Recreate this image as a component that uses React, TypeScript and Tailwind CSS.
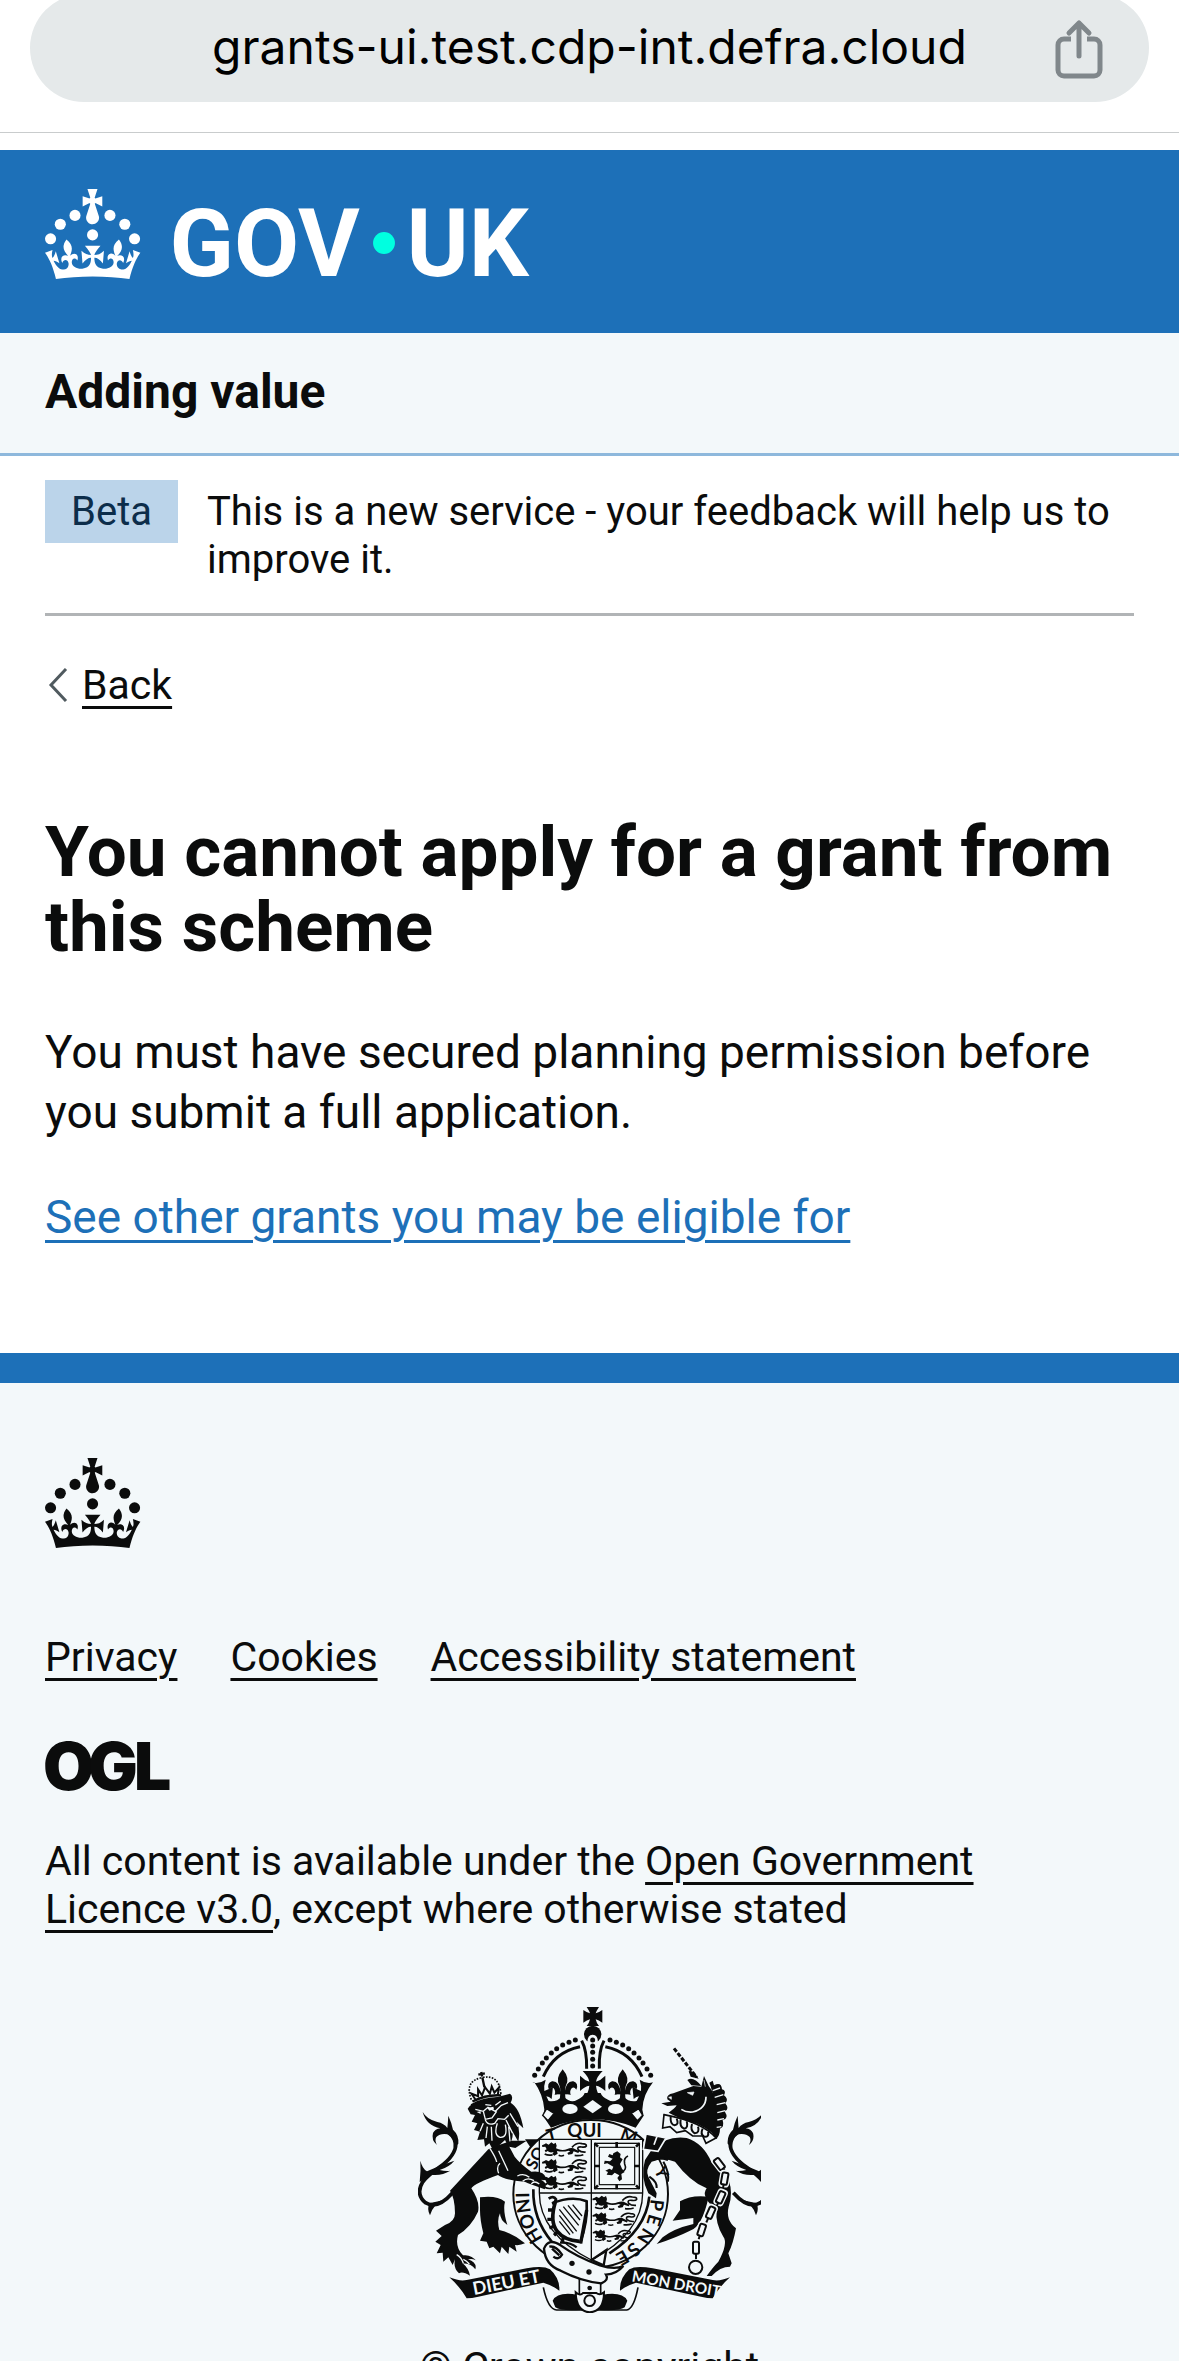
import type { ReactNode } from "react";

const INK = "#0b0c0c";
const PAPER = "#f3f8fa";

function CrownShape() {
  return (
    <g fill="currentColor">
      <circle cx="20" cy="17.6" r="3.7" />
      <circle cx="10.2" cy="23.5" r="3.7" />
      <circle cx="3.7" cy="33.2" r="3.7" />
      <circle cx="31.7" cy="30.6" r="3.7" />
      <circle cx="43.3" cy="17.6" r="3.7" />
      <circle cx="53.2" cy="23.5" r="3.7" />
      <circle cx="59.7" cy="33.2" r="3.7" />
      <path d="M33.1,9.8c.2-.1.3-.3.5-.5l4.6,2.4v-6.8l-4.6,1.5c-.1-.2-.3-.3-.5-.5l1.9-5.9h-6.7l1.9,5.9c-.2.1-.3.3-.5.5l-4.6-1.5v6.8l4.6-2.4c.1.2.3.3.5.5l-2.6,8c-.9,2.8,1.2,5.7,4.1,5.7h0c3,0,5.1-2.9,4.1-5.7l-2.6-8ZM37,37.9s-3.4,3.8-4.1,6.1c2.2,0,4.2-.5,6.4-2.8l-.7,8.5c-2-2.8-4.4-4.1-5.7-3.8.1,3.1.5,6.7,5.8,7.2,3.7.3,6.7-1.5,7-3.8.4-2.6-2-4.3-3.7-1.6-1.4-4.5,2.4-6.1,4.9-3.2-1.9-4.5-1.8-7.7,2.4-10.9,3,4,2.6,7.3-1.2,11.1,2.4-1.3,6.2,0,4,4.6-1.2-2.8-3.7-2.2-4.2.2-.3,1.7.7,3.7,3,4.2,1.9.3,4.7-.9,7-5.9-1.3,0-2.4.7-3.9,1.7l2.4-8c.6,2.3,1.4,3.7,2.2,4.5.6-1.6.5-2.8,0-5.3l5,1.8c-2.6,3.6-5.2,8.7-7.3,17.5-7.4-1.1-15.7-1.7-24.5-1.7h0c-8.8,0-17.1.6-24.5,1.7-2.1-8.9-4.7-13.9-7.3-17.5l5-1.8c-.5,2.5-.6,3.7,0,5.3.8-.8,1.6-2.3,2.2-4.5l2.4,8c-1.5-1-2.6-1.7-3.9-1.7,2.3,5,5.2,6.2,7,5.9,2.3-.4,3.3-2.4,3-4.2-.5-2.4-3-3.1-4.2-.2-2.2-4.6,1.6-6,4-4.6-3.7-3.7-4.2-7.1-1.2-11.1,4.2,3.2,4.3,6.4,2.4,10.9,2.5-2.8,6.3-1.3,4.9,3.2-1.8-2.7-4.1-1-3.7,1.6.3,2.3,3.3,4.1,7,3.8,5.4-.5,5.7-4.2,5.8-7.2-1.3-.2-3.7,1-5.7,3.8l-.7-8.5c2.2,2.3,4.2,2.7,6.4,2.8-.7-2.3-4.1-6.1-4.1-6.1h10.6Z" />
    </g>
  );
}

function GovUkLogo() {
  return (
    <svg viewBox="0 0 324 60" className="h-[90px] w-[486px] overflow-visible text-white" role="img" aria-label="GOV.UK">
      <CrownShape />
      <g fill="currentColor" fontFamily="Roboto, sans-serif" fontWeight="700" fontSize="63">
        <text x="83" y="58">GOV</text>
        <text x="241" y="58">UK</text>
      </g>
      <circle cx="226" cy="36" r="7.3" fill="#00ffe0" />
    </svg>
  );
}

function OglLogo() {
  return (
    <svg viewBox="0 0 123 50" className="h-[50px] w-[123px] overflow-visible" role="img" aria-label="Open Government Licence">
      <g fill={INK} fontFamily="Inter, sans-serif" fontWeight="900" fontSize="66">
        <text x="-2" y="49">O</text>
        <text x="43" y="49">G</text>
        <text x="89" y="49">L</text>
      </g>
    </svg>
  );
}

const pearls: [number, number][] = [
  [404, 286], [415, 267], [427, 249], [439, 234], [454, 219], [470, 206], [488, 195], [507, 187], [526, 180],
];

/* One passant lion, drawn facing left in a 130 x 46 box. */
function PassantLion({ x, y, s = 1 }: { x: number; y: number; s?: number }) {
  return (
    <g transform={`translate(${x} ${y}) scale(${s})`}>
      <path d="M6 4l8 4 8-7 7 5 6-4 3 9-2 8 8 3q14 4 26-1q14-6 24 1l12 6-3 5-14-5-4 8-12 2-3-5 9-5-6-2q-16 5-34 1l2 8-10 6-6-5 4-6q-12 4-18-3l-6 4-3-6 6-3-4-8-9 1-1-5 7-3z" fill={INK} />
      <path d="M84 16q14-16 30-11q14 0 13 7q-3 5-14 3q-16-2-10 9q8 7 22 6" fill="none" stroke={INK} strokeWidth="5" />
      <path d="M2 36q12 6 24 2M44 40q8 4 16 0M92 40q14 2 26-2" fill="none" stroke={INK} strokeWidth="5" />
    </g>
  );
}

function Fleur({ x, y }: { x: number; y: number }) {
  return (
    <g transform={`translate(${x} ${y})`} fill={INK}>
      <path d="M0 0q22 26 10 48q-4 8-3 22l2 25h-18l2-25q1-14-3-22q-12-22 10-48z" />
      <path d="M-6 70q-4-36-26-34q-17 6-9 25q7-10 14-4q7 8 3 20z" />
      <path d="M6 70q4-36 26-34q17 6 9 25q-7-10-14-4q-7 8-3 20z" />
      <path d="M-20 66h40v9h-40z" />
    </g>
  );
}

function SideTail() {
  return (
    <g>
      <path d="M158 638Q112 690 76 668Q46 642 68 606Q84 586 118 562Q176 520 166 480Q150 448 118 456" fill="none" stroke={INK} strokeWidth="11" />
      <path d="M68 396q12 22 44 30q20 4 30 18q2-20 3-37q10 22 14 42q18 16 16 42l-14 12q2-26-18-40q-22-4-34 8q-6 10 2 24q-18-14-12-36q6-12 22-14q-42-8-53-49z" fill={INK} />
      <path d="M61 542q6 24 20 32q38-18 82-32q-14 18-44 28q18 4 32 2q-26 16-58 12l-34 22q4-36 2-64z" fill={INK} />
      <path d="M90 706q-10-18-2-36l44-10q-34 14-42 46z" fill={INK} />
    </g>
  );
}

function RoyalArms() {
  return (
    <svg viewBox="54 81 1029 918" className="h-[306px] w-[343px]" role="img" aria-label="Royal coat of arms of the United Kingdom">
      {/* garter behind the supporters */}
      <path d="M375 478h400l-30 60h-330z" fill={INK} />
      <ellipse cx="572" cy="642" rx="232" ry="222" fill={PAPER} stroke={INK} strokeWidth="6" />
      <path d="M400 628q-2 90 56 158M748 650q-10 100-120 170" fill="none" stroke={INK} strokeWidth="8" />

      {/* garter motto */}
      <path id="motto-left" d="M430 776Q374 700 392 590" fill="none" />
      <g fill={INK} fontFamily="Lato, sans-serif" fontWeight="700" fontSize="56">
        <text><textPath href="#motto-left">HONI</textPath></text>
        <text x="502" y="470">QUI</text>
        <text x="406" y="572" fontSize="50" transform="rotate(-62 406 572)">SO</text>
        <text x="444" y="486" fontSize="52" transform="rotate(-14 444 486)">T</text>
        <text x="658" y="476" fontSize="52" transform="rotate(20 658 476)">M</text>
        <text x="762" y="570" fontSize="50" transform="rotate(66 762 570)">Y</text>
        <text x="752" y="656" transform="rotate(96 752 656)">P</text>
        <text x="748" y="700" transform="rotate(106 748 700)">E</text>
        <text x="732" y="740" transform="rotate(122 732 740)">N</text>
        <text x="700" y="784" transform="rotate(138 700 784)">S</text>
        <text x="672" y="808" transform="rotate(150 672 808)">E</text>
      </g>

      {/* imperial crown */}
      <path d="M560 81h37q-8 12-10 19q9-2 20-10v38q-11-8-20-10q2 10 10 20h-37q8-10 10-20q-9 2-20 10v-38q11 8 20 10q-2-7-10-19z" fill={INK} />
      <circle cx="578" cy="163" r="26" fill={INK} />
      <path d="M562 270V188q0-24 16-24t16 24v82z" fill={PAPER} />
      <path d="M545 182q16 30 15 84M612 182q-16 30-14 84" fill="none" stroke={INK} strokeWidth="9" />
      {[180, 198, 217, 238, 258].map((y) => <circle key={y} cx="578" cy={y} r="7.5" fill={INK} />)}
      {pearls.map(([x, y]) => (
        <g key={x} fill={INK}>
          <circle cx={x} cy={y} r="7.5" />
          <circle cx={1156 - x} cy={y} r="7.5" />
        </g>
      ))}
      <path d="M430 290Q462 216 540 200M726 290Q694 216 616 200" fill="none" stroke={INK} strokeWidth="9" />
      <path d="M397 307q20 6 40-8q-6 18-4 34q14-4 26-14l-4 38q-8-8-16-8l7 14q24 4 38-12h8q20 20 40 8q18-8 22-20h48q4 12 22 20q20 12 40-8h8q14 16 38 12l7-14q-8 0-16 8l-4-38q12 10 26 14q2-16-4-34q20 14 40 8q-30 36-32 82l4 18-24 36q-128-50-254 0l-24-36 4-18q-4-46-30-82z" fill={INK} />
      <Fleur x={488} y={268} />
      <Fleur x={668} y={268} />
      <path d="M548 273h60q-18 18-20 32q14-4 28-18v46q-14-14-28-16q2 20 14 36h-48q12-16 14-36q-14 2-28 16v-46q14 14 28 18q-2-14-20-32z" fill={INK} />
      <path d="M550 380l28-20 28 20-28 20z" fill={PAPER} />
      <ellipse cx="510" cy="387" rx="23" ry="15" fill={PAPER} />
      <ellipse cx="647" cy="387" rx="23" ry="15" fill={PAPER} />
      <path d="M440 386l22 14-18 22-16-16zM716 386l-22 14 18 22 16-16z" fill={PAPER} stroke={INK} strokeWidth="4" />

      {/* shield */}
      <path d="M418 478h310v160q0 120-154 202Q418 760 418 638z" fill={PAPER} stroke={INK} strokeWidth="4" />
      <path d="M574 478v362M418 639h310" stroke={INK} strokeWidth="4" />
      <PassantLion x={432} y={486} />
      <PassantLion x={432} y={536} />
      <PassantLion x={432} y={586} />
      <PassantLion x={583} y={646} />
      <PassantLion x={583} y={696} s={0.95} />
      <PassantLion x={583} y={748} s={0.85} />
      <g fill="none" stroke={INK}>
        <rect x="584" y="490" width="134" height="136" strokeWidth="4" />
        <rect x="598" y="502" width="106" height="112" strokeWidth="3.5" />
        <path d="M582 558h18M702 558h18M650 486v18M650 612v16M584 490l10 10M718 490l-10 10M584 626l10-10M718 626l-10-10" strokeWidth="8" />
      </g>
      <path d="M640 520l12-6 10 8-2 10 8 6-8 14 6 14 8 10-10 6 2 16-8 6-6-10 6-8-14-8-8 8-16-2 4-8-8-4 12-6 8 4 4-10-18-10-10 2 2-10 16 2 8-8-14-6 4-8 10 4z" fill={INK} />
      <path d="M664 576q18-6 10-24q-4-18 10-24" fill="none" stroke={INK} strokeWidth="5" />
      {/* harp */}
      <path d="M446 656q14-10 22 2q-2 10-12 12q60-24 104-6q4 60-20 126" fill="none" stroke={INK} strokeWidth="8" />
      <path d="M560 690l-18 100" stroke={INK} strokeWidth="10" />
      <path d="M466 666q-18 60 6 88q20 26 66 30" fill="none" stroke={INK} strokeWidth="11" />
      <path d="M444 690h18M442 718h18M448 744l16-6M462 766l14-12M486 786l6-18" stroke={INK} strokeWidth="10" />
      <path d="M478 688l52 66M478 706l42 54M478 724l32 40M490 680l46 56M504 676l36 44M518 674l28 34" stroke={INK} strokeWidth="4" />

      {/* lion */}
      <SideTail />
      <path d="M265 508L150 632q15 23 15 68q0 25-30 35l-27 17 17 16-19 17 16 10-12 25 18-2 2 27 15-13 13 23 7-17q-6 26 12 42q10-8 33 7q-4-22-22-37q26 0 38 18q6-20-22-30q20-4 27 7q-17-23-42-19q-25-26-15-61q40-25 60-70q7-30-20-70q10-15 80-40q15 14 80 20l10 5 50 18q10-18-10-28l15-5q-8-25-45-20q-35-25-50-45l-16-30 18 4 34-22h-45q-40 12-75 28z" fill={INK} />
      <path d="M240 652q50-7 75 13q-7 25 7 70q-22-15-22-35q-10 20-2 50q42 10 77 40q-15 7-30 5l5 20-22-15-3 22-20-22-5 20-20-20-12 5-8-20-20-3 10-22q-10-40-10-70z" fill={INK} />
      <path d="M203 386q10-18 37-21l90-24q12 8 2 27q28 17 38 77l-20-20q12 25 5 60l-17-30q2 25-13 45l-10-20-35 32-12-22-13 10-3-22-20 2 8-25-18-5 10-20-17-5 10-20-13-2z" fill={INK} />
      <g fill="none" stroke={PAPER} strokeWidth="4">
        <path d="M226 388l24 6 14-12 22 12 18-18 20-8M250 394l6 24 20-4 14-20M256 420q8 18 28 10l10-14 20 2 12-12M286 376l16-12M274 376l-18-2" />
        <path d="M292 430q-12 36 8 42q24 2 16-38M318 420l20 40M330 400l24 40M250 430l-10 24M262 440l-4 34M274 440l2 42M326 440l4 44" />
        <path d="M270 506q18 28 20 40M296 512l28 60M352 588q20-10 36 4M368 604q14-14 34-2M394 612q8-12 24 0M170 824q14 8 20 26M190 838q10 4 18 14M300 550q-12 10-4 30" />
      </g>
      <path d="M262 384l18-4 2 8-14 4zM230 396l12-2v8z" fill={PAPER} />
      <g fill="none" stroke={INK} strokeWidth="5" transform="rotate(-12 255 335)">
        <path d="M206 366q48-14 98 0M212 356q46-12 88 0" strokeWidth="7" />
        <path d="M210 350q-10-60 46-58q52 0 44 60" strokeDasharray="5 4" />
        <path d="M256 292v30M256 275v14M246 281h20" strokeWidth="7" />
        <path d="M222 352l-8-20 18 12 4-20 8 20 14-22 10 22 10-20 4 20 16-12-8 22" strokeWidth="6" />
      </g>

      {/* unicorn */}
      <g transform="translate(1158 0) scale(-1 1)"><SideTail /></g>
      <path d="M822 205L890 292" stroke={INK} strokeWidth="9" strokeDasharray="13 5" />
      <path d="M862 300q18-12 42 18l-30-2zM866 274q14-6 30 22l-24-6z" fill={INK} />
      <path d="M802 358q-4-14 18-18l60-22 24 2 8-32 14 30q22 24 22 70q10 42-10 72q-40-32-90-42q-24-10-42-20q18-12 24-22l-28 2-18-8 28-5z" fill={INK} />
      <path d="M862 338l20-2-4 10zM806 352l8-2v8zM912 300l4 20" fill={PAPER} stroke={PAPER} strokeWidth="2" />
      <path d="M918 350q0 36-40 46q-20 2-34-8" fill="none" stroke={PAPER} strokeWidth="5" />
      <path d="M928 308l10-6 4 14q22-12 24 12q14 4 6 18q16 12 4 24q14 18-2 24q14 22-6 26q6 22-8 26q0 20-12 32l-12-20q16-60 6-90q-4-36-14-60z" fill={INK} />
      <path d="M938 332l22-8M944 352l26-8M950 374l26-6M952 398l24-6M952 420l20-4M950 442l14-2" stroke={PAPER} strokeWidth="4" />
      <path d="M756 508Q800 466 860 474q50 16 74 72l52 54q14 40 0 80q-10 40 22 65q-8 45-23 75l10 30-5 10q-30 0-55 28h-15q20-28 35-43q30-55 15-75q-25-40-20-80q-50-40-30-65q-50-20-95-80q-35-15-70 0q-20 25-10 45l25 50-2 15-23-15q-25-50-10-100z" fill={INK} />
      <path d="M792 404l-4 40 22-4 20 18 26-6 22 16 30 0 10 22 30-16q-40-48-156-70z" fill={PAPER} stroke={INK} strokeWidth="5" />
      <path d="M812 410q-2 24 12 26q14-2 6-20M842 418q-4 22 10 28q14-2 8-22M876 432q-6 20 8 28q16-2 10-20M908 446q-8 16 4 24q16 2 12-14" fill="none" stroke={INK} strokeWidth="6" />
      <path d="M738 462l60 12-24 40-44-6zM778 450l-16 44" fill={INK} stroke={PAPER} strokeWidth="5" />
      <path d="M926 650q-54-6-86 14v26l-22 32 62-8v18q-60 14-92 40l-18 20q60-20 100-40q36-10 56-102z" fill={INK} />
      <path d="M748 590q24 16 22 34M790 545q18 30 14 60M760 540q16-10 44 0" fill="none" stroke={INK} strokeWidth="6" />
      {/* chain */}
      <g>
        {[[958, 552, -38], [974, 596, 10], [962, 652, 24], [932, 698, 24], [905, 750, 18], [888, 803, 0]].map(([x, y, a]) => (
          <g key={y} transform={`translate(${x} ${y}) rotate(${a})`}>
            <rect x="-11" y="-21" width="22" height="42" rx="6" fill={PAPER} stroke={PAPER} strokeWidth="10" />
            <rect x="-9" y="-18" width="18" height="36" rx="5" fill={PAPER} stroke={INK} strokeWidth="6" />
            <path d="M0 16v18" stroke={INK} strokeWidth="6" />
          </g>
        ))}
        <circle cx="887" cy="862" r="20" fill="none" stroke={INK} strokeWidth="6" />
      </g>

      {/* ribbon and belt */}
      <path d="M430 922q14 66 40 68h210q22-4 34-68" fill={PAPER} stroke={INK} strokeWidth="5" />
      <path d="M458 962q14-28 74-18l10 46q-60 4-76-8zM682 962q-14-28-74-18l-10 46q60 4 76-8z" fill={INK} />
      <path d="M148 892q32 13 52 8l180-35q50-10 70 3q30 27 28 64q-23-17-48-24l-195 42q-20 5-35 5q-20-35-52-63z" fill={INK} />
      <path d="M990 892q-32 13-52 8l-180-35q-50-10-70 3q-30 27-28 64q23-17 48-24l195 42q20 5 35 5q20-35 52-63z" fill={INK} />
      <g fill={PAPER} fontFamily="Lato, sans-serif" fontWeight="700" fontSize="54">
        <text x="222" y="945" transform="rotate(-11 222 945)">DIEU ET</text>
        <text x="694" y="904" fontSize="46" transform="rotate(10 694 904)">MON DROIT</text>
      </g>
      <path d="M538 880h64v70h-64z" fill={PAPER} stroke={INK} strokeWidth="5" />
      <path d="M432 806q14-34 50-10q50 36 118 60q44 14 70 2q-20 24-52 26q10 16-14 26q-60-6-122-38q-46-16-50-66z" fill={PAPER} stroke={INK} strokeWidth="7" />
      <path d="M448 800q20-4 38 24q-10 18-26 6M456 806l22 20" fill="none" stroke={INK} strokeWidth="7" />
      <path d="M575 840l44-30-8 46zM480 788q30-2 50 14" fill="none" stroke={INK} strokeWidth="7" />
      <circle cx="516" cy="850" r="8" fill={INK} />
      <circle cx="567" cy="876" r="8" fill={INK} />
      <path d="M527 937q14 12 22 2h40q10 8 23-2q0 58-43 60q-40-2-42-60z" fill={PAPER} stroke={INK} strokeWidth="6" />
      <circle cx="569" cy="962" r="16" fill="none" stroke={INK} strokeWidth="6" />
      <circle cx="569" cy="924" r="7" fill={INK} />
    </svg>
  );
}

function TextLink({ href, children }: { href: string; children: ReactNode }) {
  return (
    <a href={href} className="underline decoration-3 underline-offset-[7px]">
      {children}
    </a>
  );
}

export default function App() {
  return (
    <div className="flex h-screen flex-col overflow-hidden bg-white font-['Roboto',sans-serif] text-[40px] leading-[48px] text-[#0b0c0c]">
      <div className="shrink-0 border-b border-[#c9cccd] px-[30px] pb-[30px]">
        <div className="-mt-[6px] flex h-[108px] items-center rounded-full bg-[#e5e9ea] pt-[2px] pr-[46px] pl-[94px]">
          <input
            type="text"
            readOnly
            aria-label="Address"
            value="grants-ui.test.cdp-int.defra.cloud"
            className="h-[60px] w-full min-w-0 flex-1 bg-transparent pb-1 text-center font-['Inter',sans-serif] text-[48px] leading-[60px] text-black outline-none"
          />
          <button type="button" aria-label="Share">
            <svg viewBox="0 0 48 60" className="h-[60px] w-[48px]" fill="none" stroke="#80878b" strokeWidth="5" strokeLinecap="round" strokeLinejoin="round">
              <path d="M16 20H9a6 6 0 0 0-6 6v25a6 6 0 0 0 6 6h30a6 6 0 0 0 6-6V26a6 6 0 0 0-6-6h-7" strokeLinecap="butt" />
              <path d="M24 37V4M14 14l10-10 10 10" />
            </svg>
          </button>
        </div>
      </div>

      <header className="mt-[17px] shrink-0">
        <div className="bg-[#1d70b8] px-[45px] pt-[39px] pb-[54px]">
          <a href="#home" className="block w-fit"><GovUkLogo /></a>
        </div>
        <div className="border-b-3 border-[#8eb8dc] bg-[#f3f8fa] px-[45px] pt-[29px] pb-[31px] text-[48px] leading-[60px] font-bold">
          <a href="#service">Adding value</a>
        </div>
      </header>

      <div className="shrink-0 px-[45px] pt-6">
        <div className="flex items-start gap-[29px] border-b-3 border-[#b1b4b6] pb-[29px]">
          <strong className="bg-[#bbd4ea] px-[26px] pt-2 pb-[7px] font-normal text-[#0c2d4a]">Beta</strong>
          <p className="pt-2">This is a new service - your feedback will help us to improve it.</p>
        </div>

        <a href="#back" className="mt-[45px] flex w-fit items-center gap-[14px] text-[41px]">
          <svg viewBox="0 0 20 34" className="ml-[3px] h-[34px] w-[20px]" fill="none" stroke="#505a5f" strokeWidth="3">
            <path d="M18 1L3 17l15 16" />
          </svg>
          <span className="underline decoration-3 underline-offset-[7px]">Back</span>
        </a>

        <main className="pt-[105px] pb-[106px]">
          <h1 className="text-[71px] leading-[75px] font-bold">You cannot apply for a grant from this scheme</h1>
          <div className="mt-[58px] text-[46px] leading-[60px]">
            <p>You must have secured planning permission before you submit a full application.</p>
            <p className="mt-[45px] text-[#1d70b8]">
              <TextLink href="#grants">See other grants you may be eligible for</TextLink>
            </p>
          </div>
        </main>
      </div>

      <footer className="flex-1 border-t-30 border-[#1d70b8] bg-[#f3f8fa] px-[45px] pt-[75px] text-[41px]">
        <svg viewBox="0 0 64 60" className="h-[90px] w-[96px]" aria-hidden="true"><CrownShape /></svg>
        <ul className="mt-[85px] flex flex-wrap gap-x-[53px]">
          <li><TextLink href="#privacy">Privacy</TextLink></li>
          <li><TextLink href="#cookies">Cookies</TextLink></li>
          <li><TextLink href="#accessibility">Accessibility statement</TextLink></li>
        </ul>
        <div className="mt-[60px]"><OglLogo /></div>
        <p className="mt-[46px] max-w-[1000px]">
          All content is available under the <TextLink href="#ogl">Open Government Licence v3.0</TextLink>, except where otherwise stated
        </p>
        <a href="#copyright" className="mt-[74px] flex flex-col items-center gap-[30px] underline decoration-3 underline-offset-[7px]">
          <RoyalArms />
          <span>© Crown copyright</span>
        </a>
      </footer>
    </div>
  );
}
